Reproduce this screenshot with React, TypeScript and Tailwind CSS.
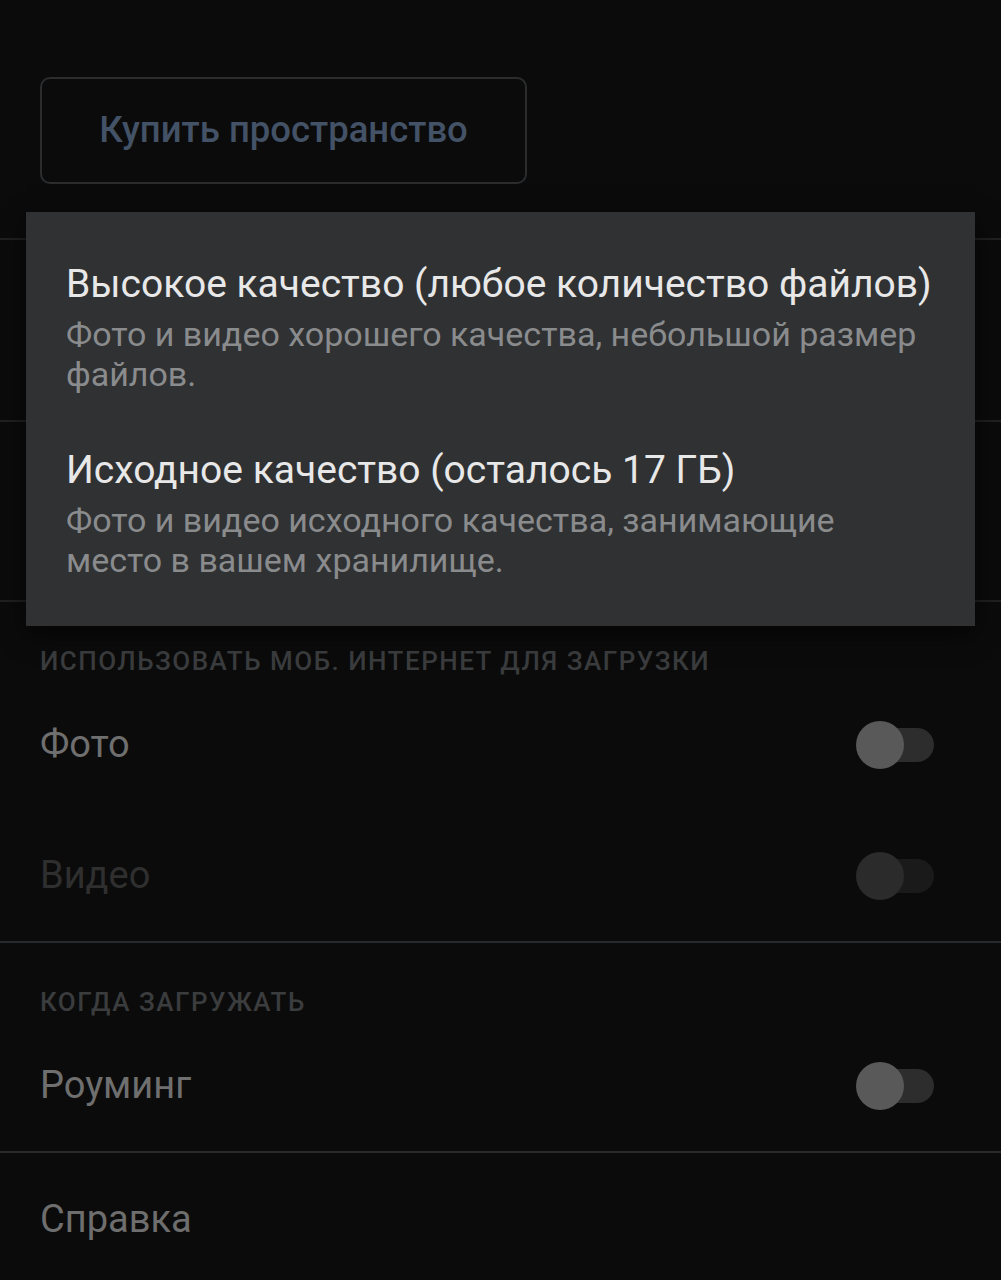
import React from 'react';

const font = { fontFamily: 'Roboto, "Noto Sans", sans-serif' };

function Toggle({ dim = false }: { dim?: boolean }) {
  return (
    <div className="relative w-[78px] h-[48px] flex items-center">
      <div className={`absolute left-[3px] right-0 h-[34px] rounded-full ${dim ? 'bg-[#1a1a1a]' : 'bg-[#2d2d2d]'}`} />
      <div className={`absolute left-0 w-[48px] h-[48px] rounded-full ${dim ? 'bg-[#2b2b2b]' : 'bg-[#595959]'}`} />
    </div>
  );
}

function Divider({ color = 'bg-[#282b2d]' }: { color?: string }) {
  return <div className={`h-[2px] ${color}`} />;
}

function SectionHeader({ title }: { title: string }) {
  return (
    <div className="px-10 pt-[45px] pb-1">
      <p className="h-[28px] leading-[28px] text-[26px] font-medium tracking-[1.5px] text-[#3a3c3e]">{title}</p>
    </div>
  );
}

function SwitchRow({ label, dim = false }: { label: string; dim?: boolean }) {
  return (
    <div className="h-[131px] flex items-center justify-between pl-10 pr-[67px]">
      <span className={`text-[38px] ${dim ? 'text-[#2f2f2f]' : 'text-[#6f6f6f]'}`}>{label}</span>
      <Toggle dim={dim} />
    </div>
  );
}

const options = [
  {
    title: 'Высокое качество (любое количество файлов)',
    sub: ['Фото и видео хорошего качества, небольшой размер', 'файлов.'],
  },
  {
    title: 'Исходное качество (осталось 17 ГБ)',
    sub: ['Фото и видео исходного качества, занимающие', 'место в вашем хранилище.'],
  },
];

export default function App() {
  return (
    <div className="relative min-h-[1280px] bg-[#0b0b0b] overflow-hidden" style={font}>
      {/* Кнопка */}
      <div className="pt-[77px] px-10">
        <div className="w-[487px] h-[107px] border-2 border-[#2a2c2e] rounded-[10px] flex items-center justify-center">
          <span className="text-[36.5px] font-medium text-[#435266]">Купить пространство</span>
        </div>
      </div>

      <div className="h-[54px]" />
      <Divider color="bg-[#1e2022]" />
      <div className="h-[180px]" />
      <Divider color="bg-[#1e2022]" />
      <div className="h-[178px]" />
      <Divider color="bg-[#1e2022]" />

      <SectionHeader title="ИСПОЛЬЗОВАТЬ МОБ. ИНТЕРНЕТ ДЛЯ ЗАГРУЗКИ" />
      <SwitchRow label="Фото" />
      <SwitchRow label="Видео" dim />
      <Divider />

      <SectionHeader title="КОГДА ЗАГРУЖАТЬ" />
      <SwitchRow label="Роуминг" />
      <Divider />

      <div className="h-[132px] flex items-center pl-10">
        <span className="text-[38px] text-[#6e6e6e]">Справка</span>
      </div>

      {/* Диалог выбора качества */}
      <div className="absolute left-[26px] right-[26px] top-[212px] h-[414px] bg-[#2f3133] py-[22px] shadow-[0_8px_24px_rgba(0,0,0,0.6)]">
        {options.map((o) => (
          <div key={o.title} className="pl-10 pr-2 py-[26px]">
            <p className="text-[39px] leading-[48px] text-[#e8e8e8] whitespace-nowrap">{o.title}</p>
            <div className="mt-[6px] text-[34px] leading-[40px] text-[#8a8b8d]">
              {o.sub.map((line) => (
                <p key={line} className="whitespace-nowrap">{line}</p>
              ))}
            </div>
          </div>
        ))}
      </div>
    </div>
  );
}
